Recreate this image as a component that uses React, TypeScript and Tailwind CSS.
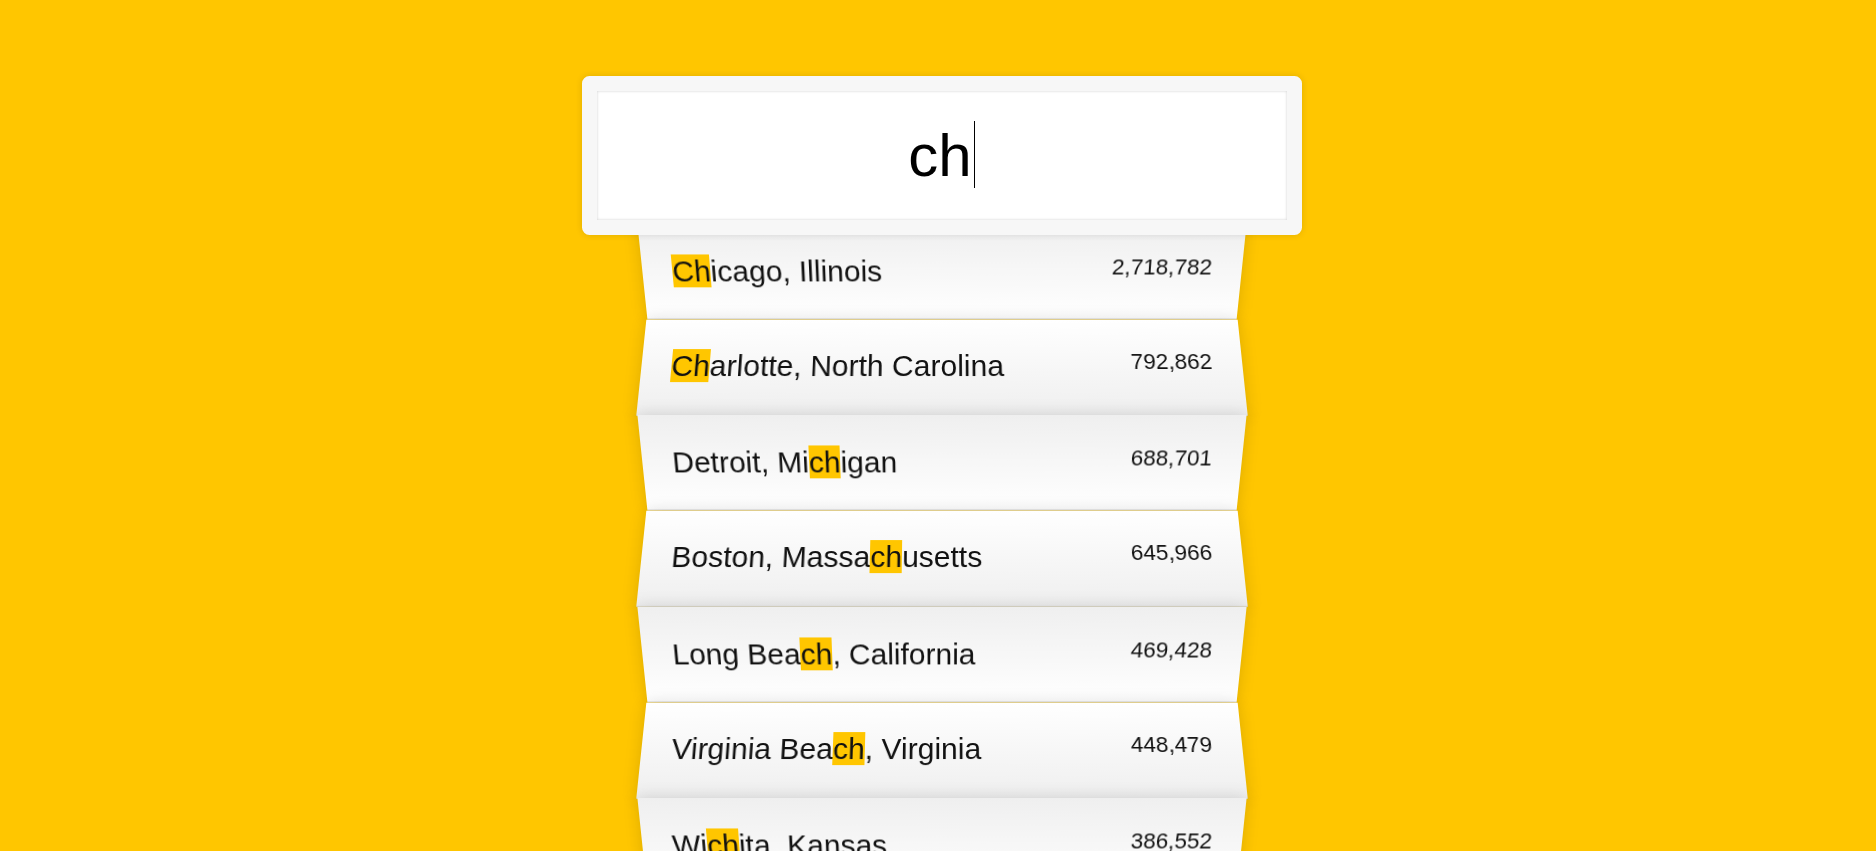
const cities = [
  { parts: ["", "Ch", "icago, Illinois"], population: "2,718,782" },
  { parts: ["", "Ch", "arlotte, North Carolina"], population: "792,862" },
  { parts: ["Detroit, Mi", "ch", "igan"], population: "688,701" },
  { parts: ["Boston, Massa", "ch", "usetts"], population: "645,966" },
  { parts: ["Long Bea", "ch", ", California"], population: "469,428" },
  { parts: ["Virginia Bea", "ch", ", Virginia"], population: "448,479" },
  { parts: ["Wi", "ch", "ita, Kansas"], population: "386,552" },
  { parts: ["", "Ch", "ula Vista, California"], population: "256,780" },
  { parts: ["", "Ch", "esapeake, Virginia"], population: "230,571" },
];

export default function App() {
  return (
    <div className="min-h-screen bg-[#ffc600] pt-[61px] pl-[7px] font-['Liberation_Sans',Arial,sans-serif] text-[30px] leading-[normal] text-[#111]">
      <form className="mx-auto max-w-[600px]">
        {/* fake input so the caret shows in the picture */}
        <div className="relative top-[15px] -left-[10%] z-[2] w-[120%] rounded-[7.5px] border-[15px] border-[#f7f7f7] bg-white py-[30px] text-center text-[60px] leading-[normal] text-black shadow-[0_0_7.5px_rgba(0,0,0,0.12),inset_0_0_3px_rgba(0,0,0,0.19)]">
          ch
          <span className="ml-[2px] inline-block h-[67px] w-px bg-black align-top" />
        </div>

        <ul className="relative m-0 p-0">
          {cities.map((city) => (
            <li
              key={city.population}
              className="flex list-none justify-between border-b-[1.5px] border-[#d8d8d8] p-[30px] leading-[34.7px] shadow-[0_0_15px_rgba(0,0,0,0.14)] odd:bg-linear-to-t odd:from-white odd:to-[#efefef] odd:[transform:perspective(150px)_rotateX(-3deg)_translateY(4.5px)] even:bg-linear-to-b even:from-white even:to-[#efefef] even:[transform:perspective(150px)_rotateX(3deg)_translateY(3px)_scale(1.001)]"
            >
              <span className="name">
                {city.parts[0]}
                <span className="bg-[#ffc600]">{city.parts[1]}</span>
                {city.parts[2]}
              </span>
              <span className="text-[22.5px] leading-[normal]">{city.population}</span>
            </li>
          ))}
        </ul>
      </form>
    </div>
  );
}
